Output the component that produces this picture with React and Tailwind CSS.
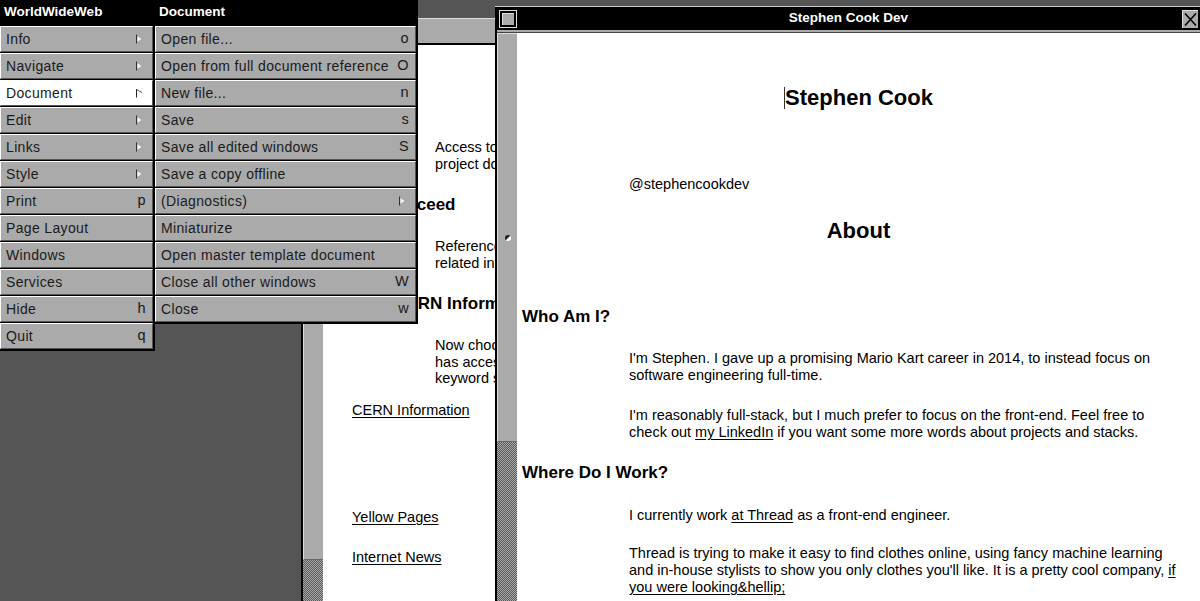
import React from "react";

function SubArrow({ active }) {
  return (
    <svg width="8" height="10" viewBox="0 0 8 10" className="block">
      {active ? (
        <>
          <path d="M1.5 1V9.5" stroke="#222" strokeWidth="1" />
          <path d="M1.5 1.5L7 4.5" stroke="#555" strokeWidth="1" />
        </>
      ) : (
        <>
          <path d="M2 1.5L7.5 5L2 8.5Z" fill="#f4f4f4" stroke="#888" strokeWidth="0.6" />
          <path d="M1.5 0.5V9.5" stroke="#333" strokeWidth="1" />
        </>
      )}
    </svg>
  );
}

function Item({ label, sc, arrow, active }) {
  return (
    <div
      className={`h-[26px] flex items-center justify-between pl-[5px] pr-[6px] border border-t-white border-l-white border-b-[#555] border-r-[#555] text-[14px] tracking-[0.35px] text-[#1a1a1a] ${
        active ? "bg-white" : "bg-[#aaa]"
      }`}
    >
      <span className="whitespace-nowrap">{label}</span>
      {arrow ? (
        <span className="pr-[3px]">
          <SubArrow active={active} />
        </span>
      ) : sc ? (
        <span className="text-[14.5px]">{sc}</span>
      ) : null}
    </div>
  );
}

function Menu({ title, items, className }) {
  return (
    <div className={`absolute top-0 bg-black pr-[2px] pb-[2px] flex flex-col gap-px ${className}`}>
      <div className="h-[25px] flex items-center pl-[4px] text-white font-bold text-[13.5px]">{title}</div>
      {items.map((it, i) => (
        <Item key={i} {...it} />
      ))}
    </div>
  );
}

function Dimple() {
  return <div className="w-[6px] h-[6px] rounded-full bg-[linear-gradient(135deg,#222_45%,#fff_55%)]" />;
}

function ScrollBar({ knobH, dimple }) {
  return (
    <div className="w-[20px] h-full flex flex-col bg-[image:repeating-conic-gradient(#5a5a5a_0_25%,#a8a8a8_0_50%)] bg-[length:2px_2px]">
      <div
        className="bg-[#aaa] border-l border-t border-l-[#ddd] border-t-[#ddd] border-b border-b-[#666] flex items-center justify-center shrink-0"
        style={{ height: knobH }}
      >
        {dimple && <Dimple />}
      </div>
    </div>
  );
}

const menu1 = [
  { label: "Info", arrow: true },
  { label: "Navigate", arrow: true },
  { label: "Document", arrow: true, active: true },
  { label: "Edit", arrow: true },
  { label: "Links", arrow: true },
  { label: "Style", arrow: true },
  { label: "Print", sc: "p" },
  { label: "Page Layout" },
  { label: "Windows" },
  { label: "Services" },
  { label: "Hide", sc: "h" },
  { label: "Quit", sc: "q" },
];

const menu2 = [
  { label: "Open file...", sc: "o" },
  { label: "Open from full document reference", sc: "O" },
  { label: "New file...", sc: "n" },
  { label: "Save", sc: "s" },
  { label: "Save all edited windows", sc: "S" },
  { label: "Save a copy offline" },
  { label: "(Diagnostics)", arrow: true },
  { label: "Miniaturize" },
  { label: "Open master template document" },
  { label: "Close all other windows", sc: "W" },
  { label: "Close", sc: "w" },
];

function BackWindow() {
  return (
    <div className="absolute left-[301px] top-[18px] w-[420px] bottom-0 bg-black pl-[2px] flex flex-col">
      <div className="h-[25px] bg-[#aaa] border-t border-[#ddd]" />
      <div className="h-[2px] bg-black" />
      <div className="flex-1 flex min-h-0">
        <ScrollBar knobH={515} dimple />
        <div className="flex-1 bg-white text-black text-[14.5px] leading-[16.5px] overflow-hidden">
          <div className="pl-[112px] mt-[94px] whitespace-nowrap">
            <div>Access to information about the W3</div>
            <div>project documentation</div>
          </div>
          <div className="pl-[5px] mt-[23px] text-[17px] font-bold leading-[20px] whitespace-nowrap">How to proceed</div>
          <div className="pl-[112px] mt-[23px] whitespace-nowrap">
            <div>References to information on</div>
            <div>related information servers</div>
          </div>
          <div className="pl-[5px] mt-[23px] text-[17px] font-bold leading-[20px] whitespace-nowrap">Finding CERN Information</div>
          <div className="pl-[112px] mt-[23px] whitespace-nowrap">
            <div>Now choose a topic. Everyone</div>
            <div>has access to a list of</div>
            <div>keyword searches</div>
          </div>
          <div className="pl-[29px] mt-[15px] underline underline-offset-2">CERN Information</div>
          <div className="pl-[29px] mt-[91px] underline underline-offset-2">Yellow Pages</div>
          <div className="pl-[29px] mt-[23px] underline underline-offset-2">Internet News</div>
        </div>
      </div>
    </div>
  );
}

function FrontWindow() {
  return (
    <div className="absolute left-[495px] top-[6px] right-0 bottom-0 bg-black pl-[2px] flex flex-col border-t border-[#ccc]">
      <div className="h-[23px] relative flex items-center justify-center text-white font-bold text-[13.5px]">
        <div className="absolute left-[2px] top-[3px] w-[18px] h-[18px] border border-[#ddd] bg-black p-[2px]">
          <div className="w-full h-full bg-[#aaa] border-t border-l border-[#ddd]" />
        </div>
        <span>Stephen Cook Dev</span>
        <div className="absolute right-[2px] top-[3px] w-[16px] h-[18px] bg-[#aaa] border-t border-l border-[#ddd]">
          <svg width="15" height="17" viewBox="0 0 15 17" className="block">
            <path d="M2 2.5L13 14.5M13 2.5L2 14.5" stroke="#000" strokeWidth="1.6" />
          </svg>
        </div>
      </div>
      <div className="h-[2px] bg-[#aaa]" />
      <div className="h-px bg-[#444]" />
      <div className="flex-1 flex min-h-0">
        <ScrollBar knobH={409} dimple />
        <div className="flex-1 bg-white text-black text-[14.5px] leading-[17px] overflow-hidden">
          <div className="mt-[53px] h-[24px] flex items-center justify-center text-[22px] font-bold leading-[24px]">
            <span className="inline-block w-px h-[22px] bg-[#333]" />
            <span>Stephen Cook</span>
          </div>
          <div className="mt-[66px] pl-[112px]">@stephencookdev</div>
          <div className="mt-[26px] text-center text-[22px] font-bold leading-[24px]">About</div>
          <div className="mt-[64px] pl-[5px] text-[17px] font-bold leading-[20px]">Who Am I?</div>
          <div className="mt-[23px] pl-[112px] whitespace-nowrap">
            <div>I'm Stephen. I gave up a promising Mario Kart career in 2014, to instead focus on</div>
            <div>software engineering full-time.</div>
          </div>
          <div className="mt-[23px] pl-[112px] whitespace-nowrap">
            <div>I'm reasonably full-stack, but I much prefer to focus on the front-end. Feel free to</div>
            <div>
              check out <span className="underline underline-offset-2">my LinkedIn</span> if you want some more words about projects and stacks.
            </div>
          </div>
          <div className="mt-[22px] pl-[5px] text-[17px] font-bold leading-[20px]">Where Do I Work?</div>
          <div className="mt-[24px] pl-[112px] whitespace-nowrap">
            I currently work <span className="underline underline-offset-2">at Thread</span> as a front-end engineer.
          </div>
          <div className="mt-[21px] pl-[112px] whitespace-nowrap">
            <div>Thread is trying to make it easy to find clothes online, using fancy machine learning</div>
            <div>
              and in-house stylists to show you only clothes you'll like. It is a pretty cool company,{" "}
              <span className="underline underline-offset-2">if</span>
            </div>
            <div>
              <span className="underline underline-offset-2">you were looking&amp;hellip;</span>
            </div>
          </div>
        </div>
      </div>
    </div>
  );
}

export default function App() {
  return (
    <div className="relative w-[1200px] h-[601px] overflow-hidden bg-[#555] font-['Liberation_Sans',Arial,sans-serif]">
      <BackWindow />
      <FrontWindow />
      <Menu title="WorldWideWeb" items={menu1} className="left-0 w-[155px]" />
      <Menu title="Document" items={menu2} className="left-[155px] w-[263px]" />
    </div>
  );
}
